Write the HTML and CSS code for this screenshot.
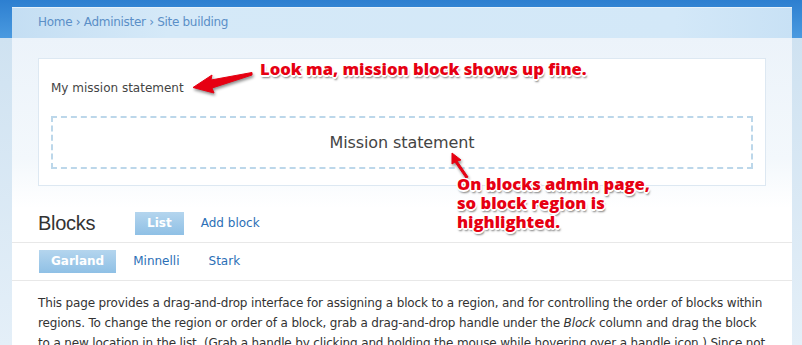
FILE: index.html
```html
<!DOCTYPE html>
<html lang="en">
<head>
    <meta charset="UTF-8">
    <title>Blocks | Site building</title>
    <link rel="stylesheet" href="styles.css">
</head>
<body>
    <div class="page">
        <div class="breadcrumb">
            <a href="#">Home</a> › <a href="#">Administer</a> › <a href="#">Site building</a>
        </div>
        <div class="main">
            <div class="mission-box">
                <div class="mission-label">My mission statement</div>
                <div class="region">Mission statement</div>
            </div>
            <div class="title-row">
                <h1>Blocks</h1>
                <ul class="tabs">
                    <li class="active"><a href="#">List</a></li>
                    <li><a href="#">Add block</a></li>
                </ul>
            </div>
            <ul class="tabs secondary">
                <li class="active"><a href="#">Garland</a></li>
                <li><a href="#">Minnelli</a></li>
                <li><a href="#">Stark</a></li>
            </ul>
            <p class="help">This page provides a drag-and-drop interface for assigning a block to a region, and for controlling the order of blocks within regions. To change the region or order of a block, grab a drag-and-drop handle under the <em>Block</em> column and drag the block to a new location in the list. (Grab a handle by clicking and holding the mouse while hovering over a handle icon.) Since not all themes implement the same regions, or display regions in the same way, blocks are positioned on a per-theme basis.</p>
        </div>
    </div>

    <!-- skitch annotations -->
    <svg class="arrows" width="802" height="345" viewBox="0 0 802 345">
        <polygon points="252,72.5 211,80 212,75 193,87.5 214,93 212,88 252,75" class="arrow"/>
        <polygon points="468,177 457,161 461,160 452,153 452,164 455,162 466,178" class="arrow"/>
    </svg>
    <div class="note note-top">Look ma, mission block shows up fine.</div>
    <div class="note note-bottom">On blocks admin page,<br>so block region is<br>highlighted.</div>
</body>
</html>
```

FILE: styles.css
```css
body {
    margin: 0;
    font-family: "DejaVu Sans", Verdana, sans-serif;
    font-size: 12px;
    color: #333;
    background: linear-gradient(to bottom, #2d7fd0 0, #4a9ae0 38px, #cfe2f1 38px, #e4eff8 345px);
    height: 345px;
    overflow: hidden;
    position: relative;
}
a {
    color: #2c6fb6;
    text-decoration: none;
}
.page {
    margin: 7px 0 0 12px;
    width: 780px;
    background: #fff;
}
.breadcrumb {
    height: 31px;
    line-height: 31px;
    padding-left: 26px;
    letter-spacing: -0.3px;
    color: #5b8fc7;
    background: linear-gradient(to right, #c4def3, #d5e9f8 20%, #d3e8f8 85%, #c8e1f5);
    box-shadow: inset 0 1px 0 #e6f2fb;
}
.breadcrumb a {
    color: #5b8fc7;
}
.main {
    padding-top: 20px;
    background: linear-gradient(to bottom, #ecf3fa 0, #f3f8fc 120px, #fff 170px);
}
.mission-box {
    margin: 0 26px;
    height: 126px;
    border: 1px solid #dde8f2;
    background: #fff;
    padding: 0 12px;
}
.mission-label {
    margin-top: 21px;
    line-height: 16px;
    color: #444;
}
.region {
    margin-top: 20px;
    height: 49px;
    line-height: 49px;
    border: 2px dashed #bcd7ea;
    text-align: center;
    font-size: 16px;
    letter-spacing: -0.1px;
    color: #444;
}
.title-row {
    display: flex;
    align-items: center;
    padding: 26px 26px 7px;
    border-bottom: 1px solid #e8e8e8;
}
h1 {
    margin: 0 40px 0 0;
    font-family: "Liberation Sans", Arial, sans-serif;
    font-size: 20px;
    font-weight: normal;
    letter-spacing: -0.3px;
    color: #333;
}
.tabs {
    display: flex;
    margin: 0;
    padding: 0;
    list-style: none;
    gap: 5px;
}
.tabs a {
    display: block;
    height: 23px;
    line-height: 23px;
    padding: 0 12px;
}
.tabs .active a {
    color: #fff;
    font-weight: bold;
    background: linear-gradient(to bottom, #b4d5ee, #8fc0e5);
}
.secondary {
    padding: 7px 26px 7px 27px;
    border-bottom: 1px solid #e8e8e8;
}
.help {
    margin: 0;
    padding: 12px 24px 0 26px;
    line-height: 20px;
    font-size: 12px;
    letter-spacing: -0.15px;
}
.arrows {
    position: absolute;
    left: 0;
    top: 0;
}
.arrow {
    fill: #e60012;
    stroke: #e60012;
    stroke-width: 1;
    stroke-linejoin: round;
    filter: drop-shadow(1px 2px 1.5px rgba(0, 0, 0, 0.45));
}
.note {
    position: absolute;
    font-family: "Open Sans", Lato, sans-serif;
    font-weight: 800;
    font-size: 16.6px;
    line-height: 19px;
    color: #e60012;
    text-shadow:
        -1.5px 0 0 #fff, 1.5px 0 0 #fff, 0 -1.5px 0 #fff, 0 1.5px 0 #fff,
        -1px -1px 0 #fff, 1px -1px 0 #fff, -1px 1px 0 #fff, 1px 1px 0 #fff,
        1px 2.5px 2px rgba(0, 0, 0, 0.5);
}
.note-top {
    left: 260px;
    top: 59px;
}
.note-bottom {
    left: 457px;
    top: 174px;
}
```
